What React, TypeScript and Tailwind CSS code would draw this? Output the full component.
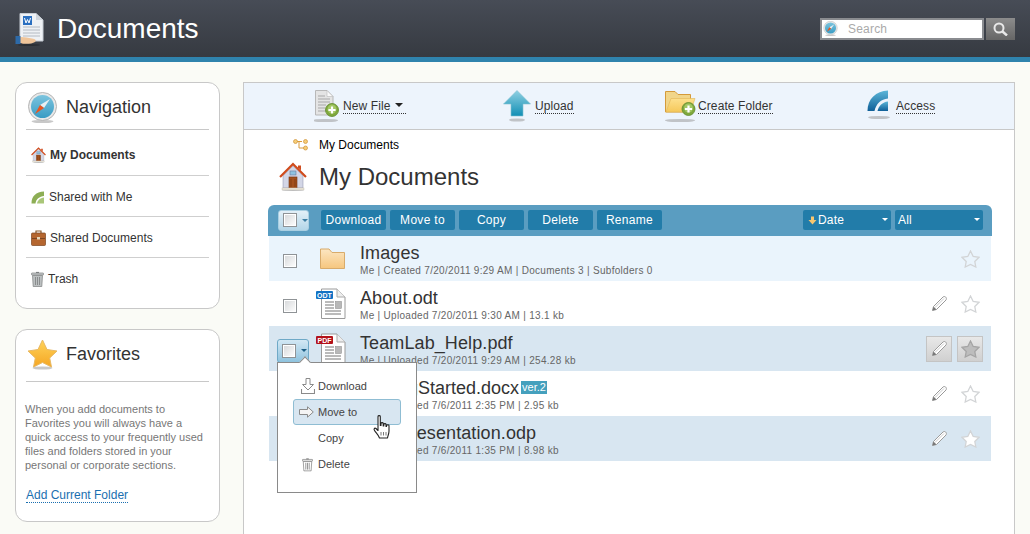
import React from "react";

const FONT = "font-['Liberation_Sans',Arial,sans-serif]";

function Shadow({ cx, cy, rx }: { cx: number; cy: number; rx: number }) {
  return <ellipse cx={cx} cy={cy} rx={rx} ry="1.6" fill="#9a9a9a" opacity="0.55" />;
}

function PlusBadge({ cx, cy, r }: { cx: number; cy: number; r: number }) {
  return (
    <g>
      <circle cx={cx} cy={cy} r={r} fill="#7fa83c" stroke="#5f8a2c" strokeWidth="0.8" />
      <circle cx={cx} cy={cy - 1} r={r - 2} fill="#a3c765" />
      <path d={`M${cx - r * 0.55} ${cy}H${cx + r * 0.55}M${cx} ${cy - r * 0.55}V${cy + r * 0.55}`} stroke="#fff" strokeWidth="2.2" />
    </g>
  );
}

function HeaderDocIcon() {
  return (
    <svg width="32" height="34" viewBox="0 0 32 34" className="flex-none">
      <path d="M5 1.500H21L28 8V29H5Z" fill="#eef1f5" stroke="#c5cbd3" />
      <path d="M21 1.500V8H28Z" fill="#cfd5dc" />
      <rect x="8" y="4" width="9" height="9" fill="#2a6fc0" />
      <path d="M9.500 6L11 11L12.500 7.500L14 11L15.500 6" stroke="#fff" strokeWidth="1" fill="none" />
      <path d="M8 15H25M8 18H25M8 21H25M8 24H25" stroke="#b4bac2" />
      <path d="M1 25H6C10 25 13 26 17 26.500C20 27 22 28 20 30C17 32 9 32.500 6 31H1Z" fill="#f0c59a" />
      <rect x="0.500" y="24" width="5" height="8" fill="#2d6aa8" />
      <ellipse cx="14" cy="33" rx="11" ry="1" fill="#22252a" opacity="0.6" />
    </svg>
  );
}

function CompassIcon({ size = 31 }: { size?: number }) {
  return (
    <svg width={size} height={size} viewBox="0 0 31 31" className="flex-none">
      <defs>
        <linearGradient id="cmp" x1="0" y1="0" x2="0" y2="1">
          <stop offset="0" stopColor="#7cc4de" />
          <stop offset="1" stopColor="#3a9cc4" />
        </linearGradient>
      </defs>
      <Shadow cx={15.5} cy={29.5} rx={11} />
      <circle cx="15.500" cy="14.500" r="14" fill="#e8e8e8" stroke="#b5b5b5" />
      <circle cx="15.500" cy="14.500" r="11.500" fill="url(#cmp)" />
      <path d="M23 7L17 16L13 13Z" fill="#e8eef2" />
      <path d="M8 22L13 13L17 16Z" fill="#e8551f" />
    </svg>
  );
}

function StarGold() {
  return (
    <svg width="31" height="31" viewBox="0 0 31 31" className="flex-none">
      <defs>
        <linearGradient id="gst" x1="0" y1="0" x2="0" y2="1">
          <stop offset="0" stopColor="#ffd35a" />
          <stop offset="1" stopColor="#f5a623" />
        </linearGradient>
      </defs>
      <Shadow cx={15.5} cy={29} rx={10} />
      <path d="M15.500 1L20 10.500L30 12L22.700 19L24.500 28L15.500 23.500L6.500 28L8.300 19L1 12L11 10.500Z" fill="url(#gst)" stroke="#e8b964" />
    </svg>
  );
}

function HouseIcon({ size = 28 }: { size?: number }) {
  return (
    <svg width={size} height={size * 1.07} viewBox="0 0 28 30" className="flex-none">
      <path d="M4 14L14 4L24 14V26H4Z" fill="#d3d6e6" stroke="#9a9db5" strokeWidth="0.6" />
      <path d="M1 15L14 2L27 15" fill="none" stroke="#cf4a1c" strokeWidth="2.2" />
      <path d="M19 3.500H22V8.500L19 5.500Z" fill="#cf4a1c" />
      <rect x="11" y="9" width="6" height="4" fill="#8fc2e0" stroke="#6c7a9a" strokeWidth="0.6" />
      <rect x="10" y="15" width="8" height="11.500" fill="#a3501c" stroke="#6f3210" strokeWidth="0.6" />
      <path d="M12 17V25M16 17V25" stroke="#7d3a12" strokeWidth="0.8" />
      <rect x="3" y="26" width="22" height="2" fill="#ece8dc" stroke="#b8b2a2" strokeWidth="0.4" />
      <ellipse cx="14" cy="29" rx="11" ry="1" fill="#999" opacity="0.6" />
    </svg>
  );
}

function SharedSmall() {
  return (
    <svg width="14" height="13" viewBox="0 0 14 13" className="flex-none">
      <path d="M0.500 12.500C0.500 5 5 1 13 0.500V5C8.500 5.500 5 8 4.500 12.500Z" fill="#8dae55" />
      <path d="M6 12.500C6.500 9.500 9 7 13 6.500V12.500Z" fill="#a9c678" />
    </svg>
  );
}

function Briefcase() {
  return (
    <svg width="15" height="16" viewBox="0 0 15 16" className="flex-none">
      <path d="M5 3V1H10V3" fill="none" stroke="#8a5a2c" strokeWidth="1.200" />
      <rect x="0.500" y="3" width="14" height="12.500" rx="1" fill="#b5662f" stroke="#7d4520" strokeWidth="0.700" />
      <rect x="1" y="8" width="13" height="1" fill="#7d4520" />
      <rect x="6" y="7" width="3" height="2.500" fill="#e6d6b8" />
    </svg>
  );
}

function TrashIcon({ w = 13, h = 16, dark = false }: { w?: number; h?: number; dark?: boolean }) {
  const s = dark ? "#666" : "#7c7f80";
  return (
    <svg width={w} height={h} viewBox="0 0 13 16" className="flex-none">
      <path d="M5 1.500H8" stroke={s} strokeWidth="1.200" />
      <rect x="0.500" y="2" width="12" height="2" rx="0.500" fill={dark ? "#fff" : "#c8cbcc"} stroke={s} strokeWidth="0.700" />
      <path d="M1.500 4.500H11.500L10.800 15.500H2.200Z" fill={dark ? "#fff" : "#bcc0c1"} stroke={s} strokeWidth="0.700" />
      <path d="M4.500 6V14M6.500 6V14M8.500 6V14" stroke={s} strokeWidth="0.800" />
    </svg>
  );
}

function NewFileIcon() {
  return (
    <svg width="25" height="32" viewBox="0 0 25 32" className="flex-none">
      <path d="M1.500 0.500H13L19 6.500V25H1.500Z" fill="#e4e4e4" stroke="#b8b8b8" />
      <path d="M13 0.500V6.500H19Z" fill="#fafafa" stroke="#b8b8b8" strokeWidth="0.600" />
      <path d="M4 6H11M4 9H16M4 12H16M4 15H12M4 18H11M4 21H12" stroke="#a8a8a8" />
      <PlusBadge cx={18} cy={20} r={6.500} />
      <Shadow cx={11} cy={30.500} rx={13} />
    </svg>
  );
}

function UploadIcon() {
  return (
    <svg width="28" height="32" viewBox="0 0 28 32" className="flex-none">
      <defs>
        <linearGradient id="upl" x1="0" y1="0" x2="0" y2="1">
          <stop offset="0" stopColor="#8fd0e2" />
          <stop offset="1" stopColor="#128fb5" />
        </linearGradient>
      </defs>
      <path d="M14 0.500L27.500 14H20V26H8V14H0.500Z" fill="url(#upl)" stroke="#7fbfd2" strokeWidth="0.600" />
      <Shadow cx={14} cy={30} rx={8} />
    </svg>
  );
}

function FolderPlusIcon() {
  return (
    <svg width="31" height="32" viewBox="0 0 31 32" className="flex-none">
      <defs>
        <linearGradient id="fpl" x1="0" y1="0" x2="0" y2="1">
          <stop offset="0" stopColor="#fde08d" />
          <stop offset="1" stopColor="#f5c85a" />
        </linearGradient>
      </defs>
      <path d="M0.500 1.500H10L13 4.500H25.500V22H0.500Z" fill="#f1d589" stroke="#d49a3a" />
      <path d="M1 22L6 8.500H30L25.500 22Z" fill="url(#fpl)" stroke="#e0b555" strokeWidth="0.600" />
      <PlusBadge cx={23.500} cy={19} r={6.500} />
      <Shadow cx={15} cy={30.500} rx={15} />
    </svg>
  );
}

function AccessIcon() {
  return (
    <svg width="25" height="32" viewBox="0 0 25 32" className="flex-none">
      <defs>
        <linearGradient id="acc" x1="0" y1="0" x2="0" y2="1">
          <stop offset="0" stopColor="#5cb6d8" />
          <stop offset="1" stopColor="#0f5f98" />
        </linearGradient>
      </defs>
      <path d="M0.500 21C0.500 9 9 1 21 0.500V8.500C14 9 9 14 7.500 21Z" fill="url(#acc)" />
      <path d="M10.500 21C11.500 16 15.500 12 21 11.500V21Z" fill="url(#acc)" />
      <Shadow cx={12} cy={27.500} rx={11} />
    </svg>
  );
}

function TreeIcon() {
  return (
    <svg width="15" height="12" viewBox="0 0 15 12" className="flex-none">
      <path d="M3 2.500H9M6 2.500V9H12" fill="none" stroke="#d99a3a" />
      <circle cx="2.500" cy="2.500" r="2" fill="#f6cd78" stroke="#cf9438" strokeWidth="0.700" />
      <circle cx="12.500" cy="2.500" r="2" fill="#f6cd78" stroke="#cf9438" strokeWidth="0.700" />
      <circle cx="12.500" cy="9" r="2" fill="#f6cd78" stroke="#cf9438" strokeWidth="0.700" />
    </svg>
  );
}

function FolderIcon() {
  return (
    <svg width="25" height="22" viewBox="0 0 25 22" className="flex-none">
      <defs>
        <linearGradient id="fld" x1="0" y1="0" x2="0" y2="1">
          <stop offset="0" stopColor="#fce6c2" />
          <stop offset="1" stopColor="#f6c67e" />
        </linearGradient>
      </defs>
      <path d="M0.500 1H9L12 4.500H24.500V20.500H0.500Z" fill="url(#fld)" stroke="#d8ab6b" />
    </svg>
  );
}

function FileIcon({ badge, color }: { badge: string; color: string }) {
  return (
    <svg width="30" height="32" viewBox="0 0 30 32" className="flex-none">
      <path d="M5.500 1H21L29 9V30.500H5.500Z" fill="#fff" stroke="#9a9a9a" />
      <path d="M21 1V9H29" fill="#eee" stroke="#aaa" />
      <path d="M9 14H18M9 17H18M9 20H18M9 23H25M9 26H25" stroke="#777" />
      <rect x="19.500" y="13.500" width="6" height="7" fill="#b8b8b8" stroke="#888" strokeWidth="0.500" />
      <rect x="0" y="3" width="17" height="8" rx="1" fill={color} />
      <text x="8.500" y="9.700" textAnchor="middle" fontSize="7" fontWeight="700" fill="#fff" fontFamily="Liberation Sans, Arial, sans-serif">
        {badge}
      </text>
    </svg>
  );
}

function Pencil() {
  return (
    <svg width="15" height="15" viewBox="0 0 15 15" className="flex-none">
      <path d="M0.500 14.500L1.500 10.500L11 1C12 0.200 13.500 0.500 14 1.500C14.500 2.500 14.500 3.200 14 4L4.500 13.500Z" fill="#fff" stroke="#9a9a9a" />
      <path d="M0.500 14.500L1.500 10.500L4.500 13.500Z" fill="#777" />
      <path d="M3 11.500L12 2.500" stroke="#ccc" />
    </svg>
  );
}

function StarOutline({ fill = "#fff", stroke = "#d2d4d6" }: { fill?: string; stroke?: string }) {
  return (
    <svg width="19" height="18" viewBox="0 0 19 18" className="flex-none">
      <path d="M9.500 1L12.200 6.500L18 7.300L13.800 11.500L14.800 17L9.500 14.400L4.200 17L5.200 11.500L1 7.300L6.800 6.500Z" fill={fill} stroke={stroke} strokeWidth="1.300" />
    </svg>
  );
}

function DownloadArrow() {
  return (
    <svg width="14" height="16" viewBox="0 0 14 16" className="flex-none">
      <path d="M5 0.500H9V6.500H12.500L7 12L1.500 6.500H5Z" fill="#fff" stroke="#8a8a8a" />
      <path d="M0.500 11V15.500H13.500V11" fill="none" stroke="#8a8a8a" strokeWidth="1.100" />
    </svg>
  );
}

function RightArrow() {
  return (
    <svg width="15" height="12" viewBox="0 0 15 12" className="flex-none">
      <path d="M0.500 3.500H8.500V0.800L14.300 6L8.500 11.200V8.500H0.500Z" fill="#f4f4f4" stroke="#8a8a8a" />
    </svg>
  );
}

function HandCursor() {
  return (
    <svg width="18" height="24" viewBox="0 0 18 24">
      <path d="M5 1.500C5 0.300 7.300 0.300 7.300 1.500V10.500L8 10.500V8.500C8 7.300 10.200 7.300 10.200 8.500V11H10.800V9.500C10.800 8.300 13 8.300 13 9.500V11.500H13.500V10.500C13.500 9.500 16 9.500 16 10.500V16C16 19 15 20 14.500 23H6.500C5.500 20 3 18 1.500 15.500C0.500 14 1.500 12.500 3 13.500L5 15.500Z" fill="#fff" stroke="#222" strokeWidth="1.100" strokeLinejoin="round" />
      <path d="M8 17V20.500M10.500 17V20.500M13 17V20.500" stroke="#555" strokeWidth="0.800" />
    </svg>
  );
}

function MagnifierIcon() {
  return (
    <svg width="15" height="14" viewBox="0 0 15 14">
      <circle cx="6" cy="6" r="4.500" fill="none" stroke="#e8e8e8" strokeWidth="2" />
      <path d="M9.500 9.500L14 13.500" stroke="#e8e8e8" strokeWidth="2.400" />
    </svg>
  );
}

function CheckBox() {
  return (
    <span className="block w-[14px] h-[14px] flex-none border border-[#8f9396] bg-gradient-to-br from-[#d5d7d9] to-white shadow-[inset_0_0_0_1px_#fff]" />
  );
}

function ToolbarAction({ icon, label, caret, width, gap }: { icon: React.ReactNode; label: string; caret?: boolean; width: string; gap: string }) {
  return (
    <div className={`flex items-start ${width} ${gap}`}>
      {icon}
      <span className="mt-[9px] flex items-center gap-[5px] h-[15px] border-b border-dotted border-[#333] text-[12px] tracking-[0.1px] text-[#333] leading-[14px]">
        {label}
        {caret && <span className="w-0 h-0 border-x-[4px] border-x-transparent border-t-[4px] border-t-[#222] mr-[3px] mb-[2px]" />}
      </span>
    </div>
  );
}

function BarButton({ label }: { label: string }) {
  return (
    <span className="w-[65px] h-[20px] rounded-[2px] bg-[#227ca9] text-white text-[12px] tracking-[0.3px] leading-[20px] text-center">{label}</span>
  );
}

function BarSelect({ label, arrow }: { label: string; arrow?: boolean }) {
  return (
    <span className="relative flex items-center gap-[1px] w-[88px] h-[20px] rounded-[2px] bg-[#227ca9] pl-[3px] text-white text-[12px] tracking-[0.2px]">
      {arrow && (
        <svg width="9" height="9" viewBox="0 0 9 9" className="ml-[2px]">
          <path d="M3 0.500H6V4H8.500L4.500 8.500L0.500 4H3Z" fill="#f8c76f" />
        </svg>
      )}
      {label}
      <span className="absolute right-[3px] top-[8px] w-0 h-0 border-x-[3px] border-x-transparent border-t-[3px] border-t-white" />
    </span>
  );
}

function MultiCheck({ caretColor, className }: { caretColor: string; className: string }) {
  return (
    <span className={`flex items-center gap-[5px] pl-[4px] rounded-[3px] border ${className}`}>
      <CheckBox />
      <span className={`w-0 h-0 border-x-[3px] border-x-transparent border-t-[3px] ${caretColor}`} />
    </span>
  );
}

interface Doc {
  name: string;
  meta: string;
  icon: React.ReactNode;
  bg: string;
  nameSpacing: string;
  pencil?: boolean;
  active?: boolean;
  version?: string;
  starFill?: string;
}

const docs: Doc[] = [
  {
    name: "Images",
    meta: "Me | Created 7/20/2011 9:29 AM | Documents 3 | Subfolders 0",
    icon: <span className="block pl-[4px]"><FolderIcon /></span>,
    bg: "bg-[#eaf4fc]",
    nameSpacing: "tracking-[0.1px]",
  },
  {
    name: "About.odt",
    meta: "Me | Uploaded 7/20/2011 9:30 AM | 13.1 kb",
    icon: <FileIcon badge="ODT" color="#1272c4" />,
    bg: "bg-white",
    nameSpacing: "tracking-[0.1px]",
    pencil: true,
  },
  {
    name: "TeamLab_Help.pdf",
    meta: "Me | Uploaded 7/20/2011 9:29 AM | 254.28 kb",
    icon: <FileIcon badge="PDF" color="#b3121a" />,
    bg: "bg-[#d8e6f1]",
    nameSpacing: "tracking-[0.1px]",
    pencil: true,
    active: true,
  },
  {
    name: "GettingStarted.docx",
    meta: "Me | Uploaded 7/6/2011 2:35 PM | 2.95 kb",
    icon: <FileIcon badge="DOC" color="#1272c4" />,
    bg: "bg-white",
    nameSpacing: "tracking-normal",
    pencil: true,
    version: "ver.2",
  },
  {
    name: "Test Presentation.odp",
    meta: "Me | Uploaded 7/6/2011 1:35 PM | 8.98 kb",
    icon: <FileIcon badge="ODP" color="#1272c4" />,
    bg: "bg-[#d8e6f1]",
    nameSpacing: "tracking-[0.1px]",
    pencil: true,
    starFill: "#fff",
  },
];

function DocRow({ doc }: { doc: Doc }) {
  return (
    <div className={`flex items-center h-[45px] pl-[14px] pr-[8px] ${doc.bg}`}>
      <div className="relative w-[14px] h-[14px] mt-[4px]">
        <CheckBox />
        {doc.active && (
          <MultiCheck
            caretColor="border-t-[#1d5f86]"
            className="absolute left-[-6px] top-[-5px] h-[24px] w-[32px] border-[#6fa9c7] bg-gradient-to-b from-[#d3e8f4] to-[#8fc3de]"
          />
        )}
      </div>
      <div className="w-[30px] ml-[19px] mt-[1px]">{doc.icon}</div>
      <div className="ml-[14px] flex-1 min-w-0 pt-[5px]">
        <div className={`flex items-center gap-[2px] h-[20px] mt-[-3px] text-[18px] leading-[20px] text-[#333] ${doc.nameSpacing}`}>
          {doc.name}
          {doc.version && (
            <span className="h-[13px] px-[1px] bg-[#45a0bd] text-white text-[11px] leading-[13px] tracking-normal">{doc.version}</span>
          )}
        </div>
        <div className="mt-[2px] text-[10px] leading-[12px] tracking-[0.3px] text-[#666] whitespace-nowrap">{doc.meta}</div>
      </div>
      {doc.pencil &&
        (doc.active ? (
          <span className="flex items-center justify-center w-[26px] h-[26px] border border-[#c4c4c4] bg-gradient-to-b from-[#e8e8e8] to-[#d0d0d0]">
            <Pencil />
          </span>
        ) : (
          <span className="flex items-center justify-center w-[26px]">
            <Pencil />
          </span>
        ))}
      <span className={`ml-[5px] flex items-center justify-center w-[26px] h-[26px] ${doc.active ? "border border-[#c4c4c4] bg-gradient-to-b from-[#e8e8e8] to-[#d0d0d0]" : ""}`}>
        <StarOutline fill={doc.active ? "#bdbdbd" : doc.starFill ?? "transparent"} stroke={doc.active ? "#a5a5a5" : "#d2d4d6"} />
      </span>
    </div>
  );
}

function NavItem({ icon, label, bold, offset }: { icon: React.ReactNode; label: string; bold?: boolean; offset: string }) {
  return (
    <div className={`flex items-center gap-[4px] border-[#cfcfcf] pl-[5px] text-[12px] text-[#333] ${offset} ${bold ? "font-bold" : ""}`}>
      {icon}
      {label}
    </div>
  );
}

export default function App() {
  return (
    <div className={`h-[534px] overflow-hidden bg-[#fafbf6] ${FONT}`}>
      <header className="flex items-center h-[62px] border-b-[5px] border-[#2f83ad] bg-gradient-to-b from-[#474c56] to-[#363a41] pl-[15px] pr-[15px]">
        <HeaderDocIcon />
        <h1 className="ml-[10px] text-[28px] leading-[32px] text-white">Documents</h1>
        <div className="ml-auto flex items-center gap-[2px]">
          <div className="flex items-center w-[164px] h-[22px] border-2 border-[#8a8c90] bg-white pl-[1px]">
            <CompassIcon size={15} />
            <span className="ml-[10px] text-[12px] tracking-[0.2px] text-[#aaa]">Search</span>
          </div>
          <div className="flex items-center justify-center w-[29px] h-[22px] bg-gradient-to-b from-[#8c8c8c] to-[#666]">
            <MagnifierIcon />
          </div>
        </div>
      </header>

      <div className="flex gap-[23px] pl-[15px] pr-[15px] pt-[20px]">
        <aside className="flex flex-col gap-[20px] w-[205px] flex-none">
          <section className="h-[227px] rounded-[12px] border border-[#c8c8c8] bg-white px-[10px]">
            <div className="flex items-center gap-[8px] h-[47px] pt-[3px] border-b border-[#c8c8c8] text-[18px] text-[#333]">
              <span className="ml-[1px]"><CompassIcon /></span>
              Navigation
            </div>
            <NavItem icon={<HouseIcon size={15} />} label="My Documents" bold offset="h-[46px] pt-[5px] border-b gap-[3px]" />
            <NavItem icon={<SharedSmall />} label="Shared with Me" offset="h-[41px] pt-[2px] border-b" />
            <NavItem icon={<Briefcase />} label="Shared Documents" offset="h-[41px] pt-[2px] border-b" />
            <NavItem icon={<TrashIcon />} label="Trash" offset="h-[41px]" />
          </section>

          <section className="h-[193px] rounded-[12px] border border-[#c8c8c8] bg-white px-[10px]">
            <div className="flex items-center gap-[8px] h-[52px] pb-[2px] border-b border-[#c8c8c8] text-[18px] text-[#333]">
              <span className="ml-[1px]"><StarGold /></span>
              Favorites
            </div>
            <p className="mt-[20px] ml-[-1px] whitespace-nowrap text-[11px] leading-[14px] text-[#777]">
              When you add documents to<br />
              Favorites you will always have a<br />
              quick access to your frequently used<br />
              files and folders stored in your<br />
              personal or corporate sections.
            </p>
            <a className="inline-block mt-[17px] border-b border-dotted border-[#1a6fb0] text-[12px] leading-[13px] text-[#1a6fb0]">Add Current Folder</a>
          </section>
        </aside>

        <main className="relative flex-1 h-[460px] border border-[#c8c8c8] bg-white">
          <div className="flex items-start h-[47px] pt-[7px] pl-[70px] border-b border-[#c8c8c8] bg-[#edf4fc]">
            <ToolbarAction icon={<NewFileIcon />} label="New File" caret width="w-[189px]" gap="gap-[4px]" />
            <ToolbarAction icon={<UploadIcon />} label="Upload" width="w-[162px]" gap="gap-[4px]" />
            <ToolbarAction icon={<FolderPlusIcon />} label="Create Folder" width="w-[202px]" gap="gap-[2px]" />
            <ToolbarAction icon={<AccessIcon />} label="Access" width="w-[100px]" gap="gap-[4px]" />
          </div>

          <div className="flex items-center h-[30px] pl-[49px] gap-[11px] text-[12px] text-black">
            <TreeIcon />
            My Documents
          </div>

          <div className="flex items-center h-[45px] pl-[35px] mt-[-6px] gap-[12px] text-[24px] text-[#333]">
            <HouseIcon />
            My Documents
          </div>

          <div className="relative ml-[24px] w-[724px] mt-[6px]">
            <div className="flex items-center h-[31px] pl-[10px] pr-[9px] pb-[1px] rounded-t-[6px] bg-[#5a9dc1]">
              <MultiCheck caretColor="border-t-[#3f7fa3]" className="h-[21px] w-[31px] border-[#a9cfe2] bg-gradient-to-b from-[#e3f0f8] to-[#b4d6e8]" />
              <div className="ml-[12px] flex gap-[4px]">
                <BarButton label="Download" />
                <BarButton label="Move to" />
                <BarButton label="Copy" />
                <BarButton label="Delete" />
                <BarButton label="Rename" />
              </div>
              <div className="ml-auto flex gap-[4px]">
                <BarSelect label="Date" arrow />
                <BarSelect label="All" />
              </div>
            </div>

            <div className="mx-px">
              {docs.map((doc) => (
                <DocRow key={doc.name} doc={doc} />
              ))}
            </div>

            <div className="absolute left-[9px] top-[157px] z-10 w-[140px] h-[131px] border border-[#8a8a8a] bg-white pt-[10px] px-[15px] text-[11px] text-[#444]">
              <span className="absolute left-[23px] top-[-5px] w-[8px] h-[8px] rotate-45 border-l border-t border-[#8a8a8a] bg-white" />
              <div className="flex items-center h-[26px] pl-[8px] gap-[3px]">
                <DownloadArrow />
                Download
              </div>
              <div className="flex items-center h-[26px] w-[108px] pl-[5px] gap-[4px] rounded-[3px] border border-[#8fbdd3] bg-[#d8e6f1]">
                <RightArrow />
                Move to
              </div>
              <div className="flex items-center h-[26px] pl-[25px]">Copy</div>
              <div className="flex items-center h-[26px] pl-[9px] gap-[5px]">
                <TrashIcon w={11} h={15} dark />
                Delete
              </div>
              <span className="absolute left-[95px] top-[52px]">
                <HandCursor />
              </span>
            </div>
          </div>
        </main>
      </div>
    </div>
  );
}
